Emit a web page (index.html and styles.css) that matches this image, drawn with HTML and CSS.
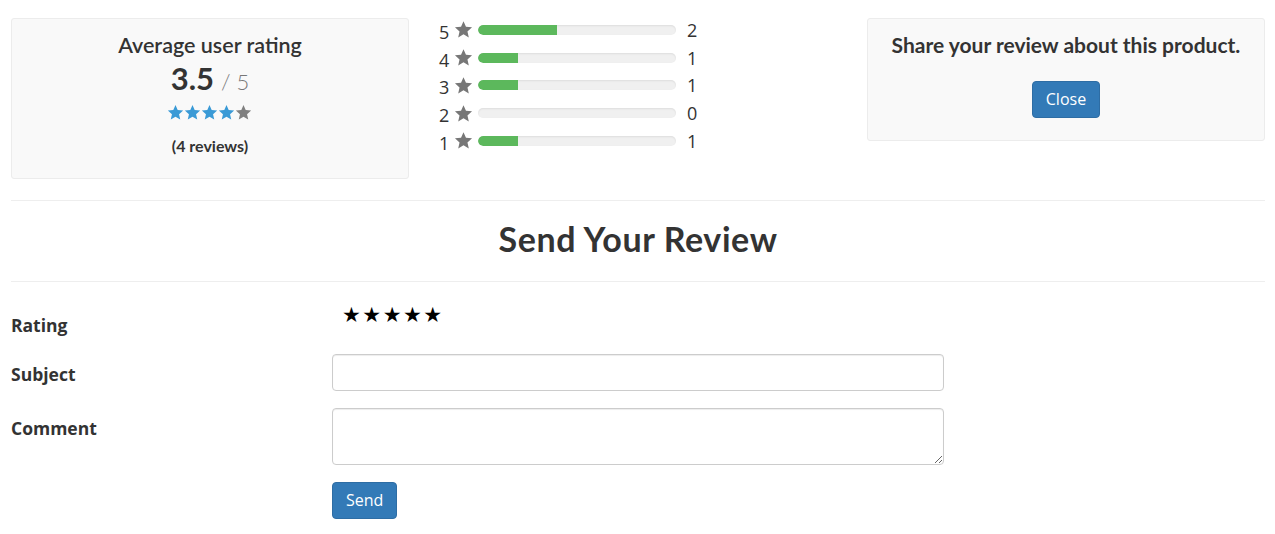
FILE: index.html
```html
<!DOCTYPE html>
<html lang="en">
<head>
<meta charset="utf-8">
<title>Reviews</title>
<link rel="stylesheet" href="styles.css">
</head>
<body>
<div class="container">
  <div class="top-row">
    <div class="col">
      <div class="panel summary">
        <h4 class="panel-title">Average user rating</h4>
        <div class="score"><span class="score-value">3.5</span><span class="score-max">/ 5</span></div>
        <div class="avg-stars">
          <svg viewBox="0 0 24 24" class="star blue"><path d="M12 1.5l3.1 7.1 7.7.7-5.8 5.1 1.7 7.6L12 18l-6.7 4 1.7-7.6L1.2 9.3l7.7-.7z"/></svg>
          <svg viewBox="0 0 24 24" class="star blue"><path d="M12 1.5l3.1 7.1 7.7.7-5.8 5.1 1.7 7.6L12 18l-6.7 4 1.7-7.6L1.2 9.3l7.7-.7z"/></svg>
          <svg viewBox="0 0 24 24" class="star blue"><path d="M12 1.5l3.1 7.1 7.7.7-5.8 5.1 1.7 7.6L12 18l-6.7 4 1.7-7.6L1.2 9.3l7.7-.7z"/></svg>
          <svg viewBox="0 0 24 24" class="star blue"><path d="M12 1.5l3.1 7.1 7.7.7-5.8 5.1 1.7 7.6L12 18l-6.7 4 1.7-7.6L1.2 9.3l7.7-.7z"/></svg>
          <svg viewBox="0 0 24 24" class="star grey"><path d="M12 1.5l3.1 7.1 7.7.7-5.8 5.1 1.7 7.6L12 18l-6.7 4 1.7-7.6L1.2 9.3l7.7-.7z"/></svg>
        </div>
        <div class="count">(4 reviews)</div>
      </div>
    </div>
    <div class="col">
      <div class="breakdown">
        <div class="bd-row">
          <span class="bd-num">5</span>
          <svg viewBox="0 0 24 24" class="bd-star"><path d="M12 1.5l3.1 7.1 7.7.7-5.8 5.1 1.7 7.6L12 18l-6.7 4 1.7-7.6L1.2 9.3l7.7-.7z"/></svg>
          <div class="bar"><div class="bar-fill" style="width:40%"></div></div>
          <span class="bd-count">2</span>
        </div>
        <div class="bd-row">
          <span class="bd-num">4</span>
          <svg viewBox="0 0 24 24" class="bd-star"><path d="M12 1.5l3.1 7.1 7.7.7-5.8 5.1 1.7 7.6L12 18l-6.7 4 1.7-7.6L1.2 9.3l7.7-.7z"/></svg>
          <div class="bar"><div class="bar-fill" style="width:20%"></div></div>
          <span class="bd-count">1</span>
        </div>
        <div class="bd-row">
          <span class="bd-num">3</span>
          <svg viewBox="0 0 24 24" class="bd-star"><path d="M12 1.5l3.1 7.1 7.7.7-5.8 5.1 1.7 7.6L12 18l-6.7 4 1.7-7.6L1.2 9.3l7.7-.7z"/></svg>
          <div class="bar"><div class="bar-fill" style="width:20%"></div></div>
          <span class="bd-count">1</span>
        </div>
        <div class="bd-row">
          <span class="bd-num">2</span>
          <svg viewBox="0 0 24 24" class="bd-star"><path d="M12 1.5l3.1 7.1 7.7.7-5.8 5.1 1.7 7.6L12 18l-6.7 4 1.7-7.6L1.2 9.3l7.7-.7z"/></svg>
          <div class="bar"><div class="bar-fill" style="width:0%"></div></div>
          <span class="bd-count">0</span>
        </div>
        <div class="bd-row">
          <span class="bd-num">1</span>
          <svg viewBox="0 0 24 24" class="bd-star"><path d="M12 1.5l3.1 7.1 7.7.7-5.8 5.1 1.7 7.6L12 18l-6.7 4 1.7-7.6L1.2 9.3l7.7-.7z"/></svg>
          <div class="bar"><div class="bar-fill" style="width:20%"></div></div>
          <span class="bd-count">1</span>
        </div>
      </div>
    </div>
    <div class="col">
      <div class="panel share">
        <h4 class="panel-title share-title">Share your review about this product.</h4>
        <button class="btn" type="button">Close</button>
      </div>
    </div>
  </div>

  <hr class="divider">
  <h2 class="section-title">Send Your Review</h2>
  <hr class="divider">

  <form class="review-form">
    <div class="form-row rating-row">
      <label class="form-label">Rating</label>
      <div class="form-field"><span class="rate-stars">★★★★★</span></div>
    </div>
    <div class="form-row">
      <label class="form-label" for="subject">Subject</label>
      <div class="form-field"><input id="subject" class="form-control" type="text"></div>
    </div>
    <div class="form-row">
      <label class="form-label" for="comment">Comment</label>
      <div class="form-field"><textarea id="comment" class="form-control textarea"></textarea></div>
    </div>
    <div class="form-row">
      <div class="form-label"></div>
      <div class="form-field"><button class="btn" type="button">Send</button></div>
    </div>
  </form>
</div>
</body>
</html>
```

FILE: styles.css
```css
* { box-sizing: border-box; }
html, body { margin: 0; padding: 0; background: #fff; }
body {
  font-family: "Open Sans", "Liberation Sans", sans-serif;
  color: #333;
  font-size: 14px;
}
.container { padding: 18px 10px 0 11px; }

.top-row { display: flex; margin: 0 -15px; align-items: flex-start; }
.col { width: 33.3333%; padding: 0 15px; }

.panel {
  background: #f9f9f9;
  border: 1px solid #ececec;
  border-radius: 3px;
  text-align: center;
}
.summary { padding: 14px 10px 22px; }
.panel-title {
  margin: 0;
  font-family: "Lato", "Open Sans", sans-serif;
  font-weight: 600;
  font-size: 21.5px;
  line-height: 24px;
  color: #333;
}
.score {
  margin-top: 5px;
  height: 32px;
  display: flex;
  justify-content: center;
  align-items: baseline;
  font-family: "Lato", sans-serif;
}
.score-value { font-size: 31px; line-height: 32px; font-weight: 700; color: #333; }
.score-max { font-size: 22px; line-height: 32px; font-weight: 300; color: #777; margin-left: 7px; }
.avg-stars { margin-top: 10px; height: 17px; display: flex; justify-content: center; }
.star { width: 17px; height: 17px; display: block; }
.star.blue { fill: #3a9ad6; }
.star.grey { fill: #808080; }
.count {
  margin-top: 15px;
  font-family: "Lato", sans-serif;
  font-weight: 700;
  font-size: 16px;
  line-height: 20px;
}

.breakdown { margin-top: -2px; }
.bd-row { display: flex; align-items: center; height: 27.75px; }
.bd-num { font-size: 18px; color: #333; width: 14px; padding-top: 4px; }
.bd-star { width: 19px; height: 19px; fill: #777; margin-left: 1px; }
.bar {
  width: 198px;
  height: 10px;
  margin-left: 5px;
  background: #f0f0f0;
  border-radius: 5px;
  box-shadow: inset 0 1px 2px rgba(0,0,0,.08);
  overflow: hidden;
}
.bar-fill { height: 100%; background: #5cb85c; border-radius: 5px 0 0 5px; }
.bd-count { font-size: 18px; margin-left: 11px; color: #333; }

.share { padding: 14px 10px 22px; }
.share-title { font-weight: 700; font-size: 21px; }
.share .btn { margin-top: 24px; }

.btn {
  display: inline-block;
  background: #337ab7;
  border: 1px solid #2e6da4;
  color: #fff;
  border-radius: 4px;
  font-family: "Open Sans", sans-serif;
  font-size: 16px;
  line-height: 23px;
  padding: 6px 13px;
  cursor: pointer;
}

.divider { border: 0; border-top: 1px solid #eee; margin: 0; }
.top-row + .divider { margin-top: 21px; }
.section-title {
  margin: 0;
  padding: 20px 0 25px;
  text-align: center;
  font-family: "Lato", sans-serif;
  font-weight: 700;
  font-size: 34px;
  line-height: 35px;
  letter-spacing: 0.6px;
  color: #333;
}

.review-form { padding-top: 21px; }
.form-row { display: flex; margin: 0 -15px 17px; align-items: flex-start; }
.rating-row { margin-bottom: 19px; }
.form-label {
  width: 25%;
  padding: 10px 15px 0;
  font-weight: 700;
  font-size: 17.5px;
  line-height: 20px;
}
.rating-row .form-label { padding-top: 12px; }
.form-field { width: 50%; padding: 0 15px; }
.rate-stars {
  display: block;
  padding-left: 10px;
  font-family: "DejaVu Sans", sans-serif;
  font-size: 21px;
  line-height: 24px;
  letter-spacing: 1.5px;
  color: #000;
}
.form-control {
  display: block;
  width: 100%;
  height: 37px;
  border: 1px solid #ccc;
  border-radius: 4px;
  box-shadow: inset 0 1px 1px rgba(0,0,0,.075);
  font-family: "Open Sans", sans-serif;
  font-size: 14px;
  padding: 6px 12px;
  background: #fff;
}
.textarea { height: 57px; resize: vertical; }
```
